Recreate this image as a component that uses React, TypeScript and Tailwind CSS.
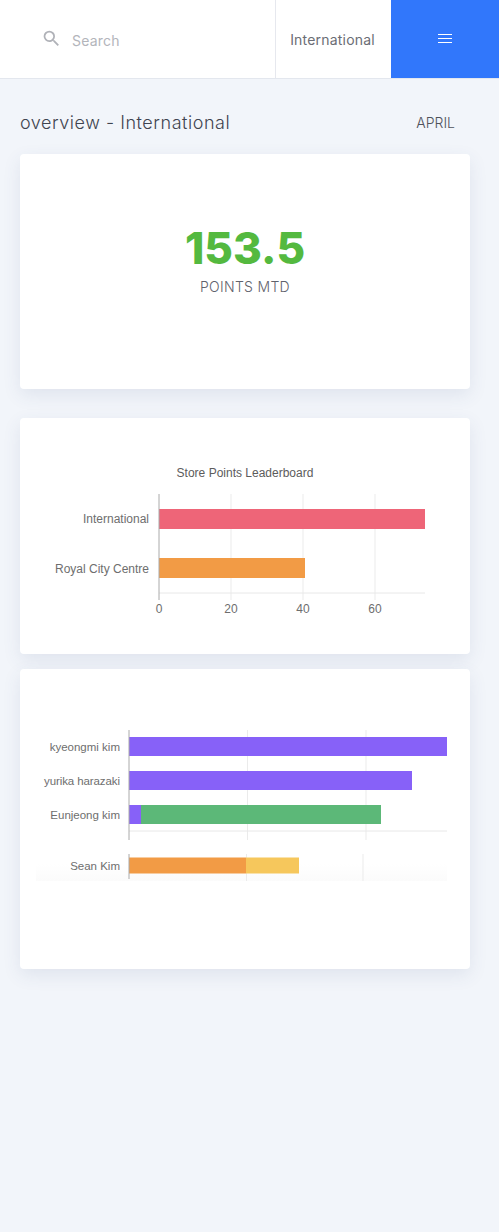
import React from 'react';
import { MdSearch } from 'react-icons/md';

const cardClass = 'bg-white rounded-[4px] shadow-[0_6px_18px_rgba(60,80,130,0.10)]';

function StoreChart() {
  const labelClass = 'fill-[#6e6e6e] text-[12px]';
  return (
    <svg viewBox="0 0 450 236" className="block w-full h-full font-['Liberation_Sans',sans-serif]">
      <text x="225" y="59" textAnchor="middle" className="fill-[#5c5c5c] text-[12px]">
        Store Points Leaderboard
      </text>
      {[211, 283, 355].map((x) => (
        <line key={x} x1={x} x2={x} y1="76" y2="182" stroke="#ebebeb" />
      ))}
      <line x1="139" x2="405" y1="175" y2="175" stroke="#e8e8e8" />
      <rect x="139" y="91" width="266" height="20" fill="#ee6578" />
      <rect x="139" y="140" width="146" height="20" fill="#f29b45" />
      <line x1="139" x2="139" y1="76" y2="182" stroke="#aaaaaa" />
      <text x="129" y="105" textAnchor="end" className={labelClass}>International</text>
      <text x="129" y="154.5" textAnchor="end" className={labelClass}>Royal City Centre</text>
      {[
        [139, '0'],
        [211, '20'],
        [283, '40'],
        [355, '60'],
      ].map(([x, t]) => (
        <text key={t} x={x} y="195" textAnchor="middle" className={labelClass}>{t}</text>
      ))}
    </svg>
  );
}

function StaffChart() {
  const labelClass = 'fill-[#6e6e6e] text-[11.5px]';
  return (
    <svg viewBox="0 0 450 300" className="block w-full h-full font-['Liberation_Sans',sans-serif]">
      <defs>
        <linearGradient id="fade" x1="0" x2="0" y1="0" y2="1">
          <stop offset="0" stopColor="#ffffff" />
          <stop offset="1" stopColor="#fbfbfb" />
        </linearGradient>
      </defs>
      {/* top chart */}
      {[227.5, 346].map((x) => (
        <line key={x} x1={x} x2={x} y1="61" y2="171" stroke="#ebebeb" />
      ))}
      <line x1="109" x2="427" y1="162" y2="162" stroke="#e8e8e8" />
      <rect x="109" y="68" width="318" height="19" fill="#8761f8" />
      <rect x="109" y="102" width="283" height="19" fill="#8761f8" />
      <rect x="109" y="136" width="12" height="19" fill="#8761f8" />
      <rect x="121" y="136" width="240" height="19" fill="#5cb878" />
      <line x1="109" x2="109" y1="61" y2="171" stroke="#aaaaaa" />
      <text x="100" y="81.5" textAnchor="end" className={labelClass}>kyeongmi kim</text>
      <text x="100" y="115.5" textAnchor="end" textLength="76" className={labelClass}>yurika harazaki</text>
      <text x="100" y="149.5" textAnchor="end" className={labelClass}>Eunjeong kim</text>
      {/* lower chart, cut off */}
      <rect x="16" y="195" width="411" height="17" fill="url(#fade)" />
      {[226.5, 343].map((x) => (
        <line key={x} x1={x} x2={x} y1="185" y2="212" stroke="#ebebeb" />
      ))}
      <rect x="109" y="188.5" width="117" height="16" fill="#f29b45" />
      <rect x="226" y="188.5" width="53" height="16" fill="#f6c75c" />
      <line x1="109" x2="109" y1="185" y2="210" stroke="#aaaaaa" />
      <text x="100" y="200.5" textAnchor="end" className={labelClass}>Sean Kim</text>
    </svg>
  );
}

export default function App() {
  return (
    <div className="min-h-[1232px] bg-[#f2f5fa] font-['Inter',sans-serif]">
      <header className="flex h-[79px] bg-white border-b border-[#e3e7ee]">
        <div className="flex items-center w-[275px] pl-[41px] gap-[10px] text-[#b3b5bb]">
          <MdSearch size={21} className="text-[#b0b2b8] -mt-[2px]" />
          <span className="text-[14px] tracking-[0.2px] mt-0.5">Search</span>
        </div>
        <div className="flex items-center justify-center w-[116px] pr-0.5 border-l border-[#e6e8ee] text-[14px] tracking-[0.2px] text-[#6b6d75]">
          International
        </div>
        <div className="flex flex-1 flex-col items-center justify-center gap-[3px] pb-[1px] bg-[#3177fb]">
          <span className="block w-[14px] h-px bg-white" />
          <span className="block w-[14px] h-px bg-white" />
          <span className="block w-[14px] h-px bg-white" />
        </div>
      </header>

      <main className="pl-5 pr-[29px]">
        <div className="flex items-center justify-between h-[75px] pt-[12px] pr-[15px]">
          <h1 className="text-[18px] font-light tracking-[0.53px] text-[#3f4450]">overview - International</h1>
          <span className="text-[14px] font-light text-[#4f525b]">APRIL</span>
        </div>

        <section className={`${cardClass} flex flex-col items-center h-[235px] pt-[67px]`}>
          <p className="text-[44px] leading-[54px] font-extrabold text-[#54b93f]">153.5</p>
          <p className="text-[14px] leading-[20px] mt-[2px] tracking-[0.3px] font-light text-[#5f626c]">POINTS MTD</p>
        </section>

        <section className={`${cardClass} h-[236px] mt-[29px]`}>
          <StoreChart />
        </section>

        <section className={`${cardClass} h-[300px] mt-[15px]`}>
          <StaffChart />
        </section>
      </main>
    </div>
  );
}
